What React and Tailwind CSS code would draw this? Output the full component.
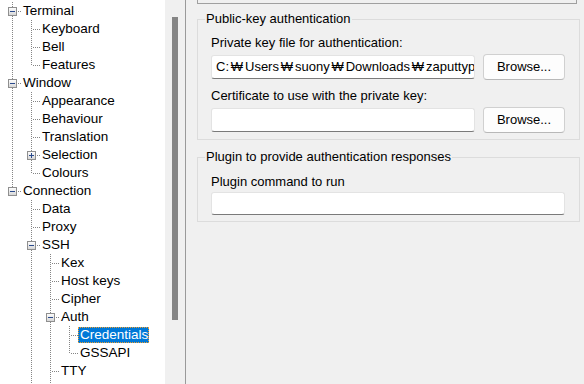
import React from "react";

const rows = [
  { t: "Terminal", l: 0, anc: [], down: true, box: "minus" },
  { t: "Keyboard", l: 1, anc: [1], down: true },
  { t: "Bell", l: 1, anc: [1], down: true },
  { t: "Features", l: 1, anc: [1], down: false },
  { t: "Window", l: 0, anc: [], down: true, box: "minus" },
  { t: "Appearance", l: 1, anc: [1], down: true },
  { t: "Behaviour", l: 1, anc: [1], down: true },
  { t: "Translation", l: 1, anc: [1], down: true },
  { t: "Selection", l: 1, anc: [1], down: true, box: "plus" },
  { t: "Colours", l: 1, anc: [1], down: false },
  { t: "Connection", l: 0, anc: [], down: false, box: "minus" },
  { t: "Data", l: 1, anc: [0], down: true },
  { t: "Proxy", l: 1, anc: [0], down: true },
  { t: "SSH", l: 1, anc: [0], down: true, box: "minus" },
  { t: "Kex", l: 2, anc: [0, 1], down: true },
  { t: "Host keys", l: 2, anc: [0, 1], down: true },
  { t: "Cipher", l: 2, anc: [0, 1], down: true },
  { t: "Auth", l: 2, anc: [0, 1], down: true, box: "minus" },
  { t: "Credentials", l: 3, anc: [0, 1, 1], down: true, sel: true },
  { t: "GSSAPI", l: 3, anc: [0, 1, 1], down: false },
  { t: "TTY", l: 2, anc: [0, 1], down: true },
  { t: "X11", l: 2, anc: [0, 1], down: true },
];

const DOT = "#858585";

function VDots({ from, to }) {
  const out = [];
  for (let y = from; y < to; y += 2) out.push(<rect key={y} x={9} y={y} width={1} height={1} fill={DOT} />);
  return out;
}

function Cell({ kind, down, box }) {
  return (
    <svg width="19" height="18" className="shrink-0 block" shapeRendering="crispEdges">
      {kind === "line" && <VDots from={0} to={18} />}
      {kind === "own" && (
        <>
          <VDots from={0} to={9} />
          {down && <VDots from={10} to={18} />}
          {[11, 13, 15, 17].map((x) => (
            <rect key={x} x={x} y={9} width={1} height={1} fill={DOT} />
          ))}
          {box && (
            <>
              <defs>
                <linearGradient id="bx" x1="0" y1="0" x2="0" y2="1">
                  <stop offset="0" stopColor="#ffffff" />
                  <stop offset="1" stopColor="#d4d4d4" />
                </linearGradient>
              </defs>
              <rect x={5.5} y={5.5} width={8} height={8} fill="url(#bx)" stroke="#8f8f8f" />
              <rect x={7} y={9} width={5} height={1} fill="#2a4a8c" />
              {box === "plus" && <rect x={9} y={7} width={1} height={5} fill="#2a4a8c" />}
            </>
          )}
        </>
      )}
    </svg>
  );
}

function TreeRow({ r }) {
  const cells = [];
  for (let i = 0; i < r.l; i++) cells.push(<Cell key={i} kind={r.anc[i] ? "line" : "none"} />);
  cells.push(<Cell key="own" kind="own" down={r.down} box={r.box} />);
  return (
    <div className="flex items-center h-[18px] pl-[3px]">
      {cells}
      {r.sel ? (
        <span className="ml-[-1px] pl-[2px] pr-[1px] h-[16px] leading-[16px] bg-[#0078d7] text-white outline-1 outline-dotted outline-[#f0a030] -outline-offset-1 whitespace-nowrap">
          {r.t}
        </span>
      ) : (
        <span className="pl-[1px] h-[16px] leading-[16px] text-black whitespace-nowrap">{r.t}</span>
      )}
    </div>
  );
}

function Won() {
  return <span className="inline-block w-[16px] text-center">₩</span>;
}

function TextBox({ w, h, children }) {
  return (
    <div
      className={`${w} ${h} bg-white border border-[#e3e3e3] border-b-[#7a7a7a] rounded-[3px] pl-[4px] overflow-hidden whitespace-nowrap flex items-center text-black`}
    >
      <span className="whitespace-nowrap">{children}</span>
    </div>
  );
}

function Button({ children }) {
  return (
    <div className="w-[82px] h-[26px] bg-[#fdfdfd] border border-[#d0d0d0] border-b-[#b8b8b8] rounded-[4px] flex items-center justify-center text-black">
      {children}
    </div>
  );
}

export default function App() {
  return (
    <div className="w-[584px] h-[384px] flex overflow-hidden font-['Liberation_Sans',Arial,sans-serif] bg-[#f0f0f0]">
      <div className="w-[165px] h-full bg-white pt-[2px] overflow-hidden text-[13.5px]">
        {rows.map((r) => (
          <TreeRow key={r.t} r={r} />
        ))}
      </div>
      <div className="w-[20px] h-full bg-[#f0f0f0] flex flex-col">
        <div className="mt-[17px] ml-[7px] w-[6px] h-[303px] bg-[#858585]" />
      </div>
      <div className="w-px h-full bg-[#9a9a9a]" />
      <div className="flex-1 h-full flex flex-col text-[13px] leading-4 text-black">
        <div className="ml-[11px] mr-[7px] h-[4px] border-x border-b border-[#a0a0a0]" />
        <fieldset className="ml-[11px] mr-[4px] mt-[7px] border border-[#dcdcdc] p-0">
          <legend className="ml-[7px] px-[1px] h-4 leading-4">Public-key authentication</legend>
          <div className="pt-[8px] pl-[13px] pr-[14px] pb-[6px] flex flex-col">
            <div className="h-4">Private key file for authentication:</div>
            <div className="mt-[3px] h-[26px] flex items-center justify-between">
              <TextBox w="w-[264px]" h="h-[24px]">
                C:<Won />Users<Won />suony<Won />Downloads<Won />zaputtyprivatekey.ppk
              </TextBox>
              <Button>Browse...</Button>
            </div>
            <div className="mt-[8px] h-4">Certificate to use with the private key:</div>
            <div className="mt-[3px] h-[26px] flex items-center justify-between">
              <TextBox w="w-[264px]" h="h-[24px]" />
              <Button>Browse...</Button>
            </div>
          </div>
        </fieldset>
        <fieldset className="ml-[11px] mr-[4px] mt-[9px] border border-[#dcdcdc] p-0">
          <legend className="ml-[7px] px-[1px] h-4 leading-4">Plugin to provide authentication responses</legend>
          <div className="pt-[9px] pl-[13px] pr-[14px] pb-[6px] flex flex-col">
            <div className="h-4">Plugin command to run</div>
            <div className="mt-[2px]">
              <TextBox w="w-full" h="h-[23px]" />
            </div>
          </div>
        </fieldset>
      </div>
    </div>
  );
}
